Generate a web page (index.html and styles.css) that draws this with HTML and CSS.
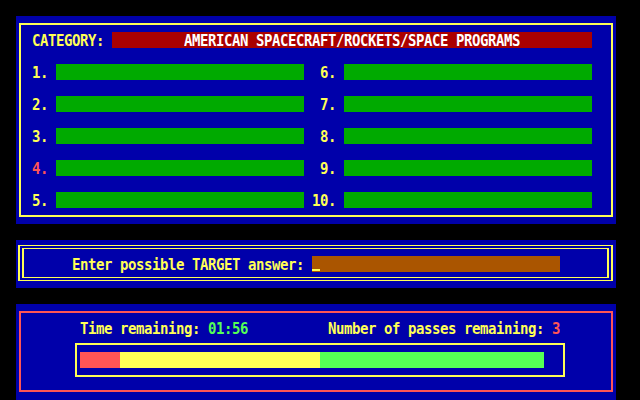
FILE: index.html
```html
<!DOCTYPE html>
<html>
<head>
<meta charset="utf-8">
<link rel="stylesheet" href="styles.css">
</head>
<body>
<div class="screen">
  <section class="panel board-panel">
    <div class="frame">
      <div class="cat">
        <span class="t yellow">CATEGORY:</span>
        <div class="catbar"><span class="t">AMERICAN SPACECRAFT/ROCKETS/SPACE PROGRAMS</span></div>
      </div>
      <div class="grid">
        <div class="item"><span class="num"><span class="t">1.</span></span><div class="slot"></div></div>
        <div class="item"><span class="num"><span class="t">6.</span></span><div class="slot"></div></div>
        <div class="item"><span class="num"><span class="t">2.</span></span><div class="slot"></div></div>
        <div class="item"><span class="num"><span class="t">7.</span></span><div class="slot"></div></div>
        <div class="item"><span class="num"><span class="t">3.</span></span><div class="slot"></div></div>
        <div class="item"><span class="num"><span class="t">8.</span></span><div class="slot"></div></div>
        <div class="item"><span class="num current"><span class="t">4.</span></span><div class="slot"></div></div>
        <div class="item"><span class="num"><span class="t">9.</span></span><div class="slot"></div></div>
        <div class="item"><span class="num"><span class="t">5.</span></span><div class="slot"></div></div>
        <div class="item"><span class="num"><span class="t">10.</span></span><div class="slot"></div></div>
      </div>
    </div>
  </section>

  <section class="panel entry-panel">
    <div class="dframe">
      <span class="t prompt">Enter possible TARGET answer:</span>
      <div class="input"><span class="cursor"></span></div>
    </div>
  </section>

  <section class="panel status-panel">
    <div class="sframe">
      <div class="info">
        <div class="time"><span class="t">Time remaining: <span class="lgreen">01:56</span></span></div>
        <div class="passes"><span class="t">Number of passes remaining: <span class="lred">3</span></span></div>
      </div>
      <div class="meter">
        <div class="bar">
          <div class="seg red" style="width:40px"></div>
          <div class="seg yel" style="width:200px"></div>
          <div class="seg grn" style="width:224px"></div>
        </div>
      </div>
    </div>
  </section>
</div>
</body>
</html>
```

FILE: styles.css
```css
* { box-sizing: border-box; }

html, body {
  margin: 0;
  padding: 0;
  background: #000;
}

.screen {
  width: 640px;
  height: 400px;
  overflow: hidden;
  padding: 16px 24px 0 16px;
  font-family: "DejaVu Sans Mono", "Liberation Mono", monospace;
  font-weight: bold;
  font-size: 14px;
  line-height: 16px;
  letter-spacing: -0.43px;
  color: #FFFF55;
}

.t {
  display: inline-block;
  white-space: pre;
  transform: scaleY(1.15);
}

.yellow { color: #FFFF55; }
.lgreen { color: #55FF55; }
.lred { color: #FF5555; }

.panel {
  width: 600px;
  background: #0000AA;
}

/* ---- board ---- */
.board-panel {
  padding: 7px 3px;
}

.frame {
  border: 2px solid #FFFF55;
  padding: 7px 19px 7px 3px;
}

.cat {
  display: flex;
  align-items: center;
  height: 16px;
  padding-left: 8px;
  gap: 8px;
}

.catbar {
  width: 480px;
  height: 16px;
  background: #AA0000;
  color: #FFFFFF;
  text-align: center;
}

.grid {
  margin-top: 16px;
  display: grid;
  grid-template-columns: 280px 280px;
  column-gap: 8px;
  row-gap: 16px;
}

.item {
  display: flex;
  height: 16px;
}

.num {
  width: 32px;
  padding-right: 8px;
  text-align: right;
  color: #FFFF55;
}

.num.current { color: #FF5555; }

.slot {
  flex: 1;
  height: 16px;
  background: #00AA00;
}

/* ---- entry ---- */
.entry-panel {
  margin-top: 16px;
  padding: 5px 3px 7px 2px;
}

.dframe {
  border-style: double;
  border-color: #FFFF55;
  border-width: 4px 6px;
  padding: 7px 0 5px 48px;
  display: flex;
  align-items: center;
  height: 36px;
}

.prompt {
  margin-right: 8px;
}

.input {
  width: 248px;
  height: 16px;
  background: #AA5500;
  display: flex;
}

.cursor {
  display: block;
  width: 8px;
  height: 2px;
  margin-top: 13px;
  background: #FFFF55;
}

/* ---- status ---- */
.status-panel {
  margin-top: 16px;
  height: 96px;
  padding: 7px 3px 8px 3px;
}

.sframe {
  border: 2px solid #FF5555;
  padding: 7px 0 13px 0;
  height: 81px;
}

.info {
  display: flex;
  height: 16px;
  padding-left: 59px;
}

.time { width: 248px; }

.meter {
  margin: 7px 0 0 54px;
  width: 490px;
  height: 34px;
  border: 2px solid #FFFF55;
  padding: 7px 19px 7px 3px;
}

.bar {
  display: flex;
  height: 16px;
}

.seg { height: 16px; }
.seg.red { background: #FF5555; }
.seg.yel { background: #FFFF55; }
.seg.grn { background: #55FF55; }
```
